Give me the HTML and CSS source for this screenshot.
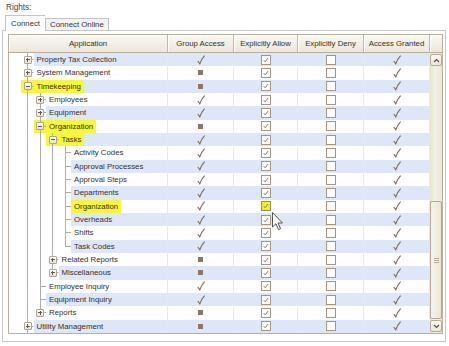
FILE: index.html
```html
<!DOCTYPE html>
<html lang="en">
<head>
  <meta charset="UTF-8" />
  <title>Rights</title>
  <link rel="stylesheet" href="styles.css">
</head>
<body>
  <div class="rights">Rights:</div>
  <div class="tabs">
    <div class="tab active">Connect</div>
    <div class="tab">Connect Online</div>
  </div>

  <div class="panel">
    <div class="grid">
      <div class="head">
        <div class="hcell">Application</div>
        <div class="hcell">Group Access</div>
        <div class="hcell">Explicitly Allow</div>
        <div class="hcell">Explicitly Deny</div>
        <div class="hcell">Access Granted</div>
        <div class="hcell corner"></div>
      </div>
      <div class="body">
        <div id="rows" class="rows"></div>
        <div class="scroll">
          <div class="sbtn up"><svg width="7" height="5" viewBox="0 0 7 5"><path d="M1 4 L3.5 1.5 L6 4" fill="none" stroke="#5a5048" stroke-width="1.2"/></svg></div>
          <div class="track"></div>
          <div class="thumb"><span class="grip"></span></div>
          <div class="sbtn down"><svg width="7" height="5" viewBox="0 0 7 5"><path d="M1 1 L3.5 3.5 L6 1" fill="none" stroke="#5a5048" stroke-width="1.2"/></svg></div>
        </div>
      </div>
    </div>
  </div>

  <svg class="cursor" width="12" height="19" viewBox="0 0 12 19">
    <path d="M0.5 0.5 L0.5 15 L4 11.8 L6.6 17.6 L8.6 16.7 L6 11 L10.5 11 Z" fill="#fff" stroke="#555" stroke-width="1" stroke-linejoin="round"/>
  </svg>

  <script>
    // g: tree guides per level (| pass, T tee, L last), box: expander, grp: c = check, s = square
    const rows = [
      { g: 'T', box: '+', text: 'Property Tax Collection', grp: 'c' },
      { g: 'T', box: '+', text: 'System Management', grp: 's' },
      { g: 'T', box: '-', text: 'Timekeeping', grp: 's', hl: 2 },
      { g: '|T', box: '+', text: 'Employees', grp: 'c' },
      { g: '|T', box: '+', text: 'Equipment', grp: 'c' },
      { g: '|T', box: '-', text: 'Organization', grp: 's', hl: 2 },
      { g: '||T', box: '-', text: 'Tasks', grp: 'c', hl: 2 },
      { g: '|||T', text: 'Activity Codes', grp: 'c' },
      { g: '|||T', text: 'Approval Processes', grp: 'c' },
      { g: '|||T', text: 'Approval Steps', grp: 'c' },
      { g: '|||T', text: 'Departments', grp: 'c' },
      { g: '|||T', text: 'Organization', grp: 'c', hl: 1, mark: true },
      { g: '|||T', text: 'Overheads', grp: 'c' },
      { g: '|||T', text: 'Shifts', grp: 'c' },
      { g: '|||L', text: 'Task Codes', grp: 'c' },
      { g: '||T', box: '+', text: 'Related Reports', grp: 's' },
      { g: '||L', box: '+', text: 'Miscellaneous', grp: 's' },
      { g: '|T', text: 'Employee Inquiry', grp: 'c' },
      { g: '|T', text: 'Equipment Inquiry', grp: 'c' },
      { g: '|L', box: '+', text: 'Reports', grp: 's' },
      { g: 'T', box: '+', text: 'Utility Management', grp: 's' }
    ];

    const tick = '<svg class="tick" width="8" height="10" viewBox="0 0 8 10"><path d="M0.8 6 L2.8 8.8 C4 5.5 5.5 2.8 7.6 0.6" fill="none" stroke="#7a6a5c" stroke-width="1.1"/></svg>';
    const boxTick = '<svg width="6" height="6" viewBox="0 0 6 6"><path d="M0.8 3.2 L2.2 4.8 L5.2 1" fill="none" stroke="#8a7e72" stroke-width="1"/></svg>';

    const list = document.getElementById('rows');
    rows.forEach((r, i) => {
      const row = document.createElement('div');
      row.className = 'row' + (i % 2 === 0 ? ' alt' : '');

      let app = '<div class="cell app">';
      [...r.g].forEach((c, lvl) => {
        const own = lvl === r.g.length - 1;
        let cls = c === '|' ? 'pass' : c === 'T' ? 'tee' : 'last';
        if (own && r.hl === 2) cls += ' hl';
        let inner = '';
        if (own && r.box) {
          inner = '<span class="box ' + (r.box === '+' ? 'plus' : 'minus') + '"></span>';
        }
        app += '<span class="g ' + cls + '">' + inner + '</span>';
      });
      app += '<span class="label"><span class="txt' + (r.hl ? ' hl' : '') + '">' + r.text + '</span></span></div>';

      const grp = r.grp === 'c' ? tick : '<span class="sq"></span>';
      row.innerHTML = app +
        '<div class="cell">' + grp + '</div>' +
        '<div class="cell"><span class="cb' + (r.mark ? ' hl' : '') + '">' + boxTick + '</span></div>' +
        '<div class="cell"><span class="cb"></span></div>' +
        '<div class="cell">' + tick + '</div>';
      list.appendChild(row);
    });
  </script>
</body>
</html>
```

FILE: styles.css
```css
* {
  box-sizing: border-box;
  margin: 0;
  padding: 0;
}
body {
  font-family: "Liberation Sans", Arial, sans-serif;
  font-size: 7.8px;
  color: #352f2a;
  background: #fff;
  width: 449px;
  height: 346px;
  overflow: hidden;
}
.rights {
  font-size: 8.2px;
  height: 15px;
  line-height: 16px;
  padding-left: 6px;
  color: #444;
}
.tabs {
  display: flex;
  align-items: flex-end;
  padding-left: 5px;
  height: 15px;
  position: relative;
  z-index: 1;
}
.tab {
  height: 12px;
  line-height: 11px;
  padding: 0 4px;
  border: 1px solid #c4c4c4;
  border-bottom: none;
  background: #f3f3f3;
  color: #333;
}
.tab.active {
  height: 16px;
  line-height: 15px;
  background: #fff;
  padding: 0 5px;
  margin-bottom: -1px;
  border-right: none;
}
.panel {
  margin: 0 3px 0 2px;
  border: 1px solid #c6c6c6;
  padding: 3px 2px 7px 5px;
  background: #fff;
}
.grid {
  border: 1px solid #b9ad9b;
}
.head {
  display: grid;
  grid-template-columns: 159px 66px 64px 66px 66px 1fr;
  height: 18px;
  background: linear-gradient(#faf9f3, #ebe7d9);
  border-bottom: 1px solid #b9ad9b;
}
.hcell {
  display: flex;
  align-items: center;
  justify-content: center;
  border-right: 1px solid #c3b7a5;
  box-shadow: inset 1px 1px 0 #fff;
  color: #352f2a;
}
.hcell.corner {
  border-right: none;
}
.body {
  display: flex;
}
.rows {
  width: 421px;
}
.row {
  display: grid;
  grid-template-columns: 159px 66px 64px 66px 66px;
  height: 13.33px;
  background: #fff;
}
.cell {
  display: flex;
  align-items: center;
  justify-content: center;
  border-right: 1px solid #ebe8e0;
}
.row.alt .cell {
  background: #dde7f7;
}
.row.alt .cell.app {
  background: #fff;
}
.cell.app {
  justify-content: flex-start;
  align-items: stretch;
  padding-left: 12px;
}
.g {
  flex: 0 0 12.5px;
  display: flex;
  align-items: center;
  justify-content: center;
  background-repeat: no-repeat;
}
.g.pass {
  background-image: linear-gradient(#adadad, #adadad);
  background-size: 1px 100%;
  background-position: 6px 0;
}
.g.tee {
  background-image: linear-gradient(#adadad, #adadad), linear-gradient(#adadad, #adadad);
  background-size: 1px 100%, 6.5px 1px;
  background-position: 6px 0, 6px 6px;
}
.g.last {
  background-image: linear-gradient(#adadad, #adadad), linear-gradient(#adadad, #adadad);
  background-size: 1px 7px, 6.5px 1px;
  background-position: 6px 0, 6px 6px;
}
.g.hl {
  background-color: #f7f73a;
}
.box {
  width: 8px;
  height: 8px;
  border: 1px solid #b0a393;
  border-radius: 1px;
  background: linear-gradient(#fff, #e6e2d6);
  display: flex;
  align-items: center;
  justify-content: center;
  margin-left: 1px;
}
.box::before {
  content: "";
  width: 4px;
  height: 1px;
  background: #5f5750;
}
.box.plus {
  background-image: linear-gradient(#5f5750, #5f5750), linear-gradient(#fff, #e6e2d6);
  background-size: 1px 4px, 100% 100%;
  background-position: center, 0 0;
  background-repeat: no-repeat;
}
.label {
  flex: 1;
  display: flex;
  align-items: stretch;
}
.row.alt .label {
  background: #dde7f7;
}
.txt {
  display: flex;
  align-items: center;
  padding: 0 3px;
  white-space: nowrap;
}
.txt.hl {
  background: #f7f73a;
}
.sq {
  width: 5px;
  height: 5px;
  background: #8a7768;
}
.cb {
  width: 10px;
  height: 10px;
  border: 1px solid #a69480;
  background: #fdfdfb;
  display: flex;
  align-items: center;
  justify-content: center;
}
.cb.hl {
  background: #f2ef2a;
  border-color: #9a8a5a;
}
.scroll {
  width: 12px;
  height: 280px;
  display: flex;
  flex-direction: column;
  background: linear-gradient(90deg, #e6e3d1, #f4f2e6 40%, #ebe8d7);
}
.sbtn {
  height: 12px;
  margin: 1px 0;
  border: 1px solid #b6a996;
  border-radius: 2px;
  background: linear-gradient(#fbfaf5, #ebe8da);
  display: flex;
  align-items: center;
  justify-content: center;
}
.track {
  flex: 1;
}
.thumb {
  height: 118px;
  border: 1px solid #b3a694;
  border-radius: 2px;
  background: linear-gradient(90deg, #f6f5ec, #e9e6d6);
  display: flex;
  align-items: center;
  justify-content: center;
}
.grip {
  width: 5px;
  height: 5px;
  background: repeating-linear-gradient(#b8ad9c 0 1px, transparent 1px 2px);
}
.cursor {
  position: absolute;
  left: 272px;
  top: 212px;
}
```
